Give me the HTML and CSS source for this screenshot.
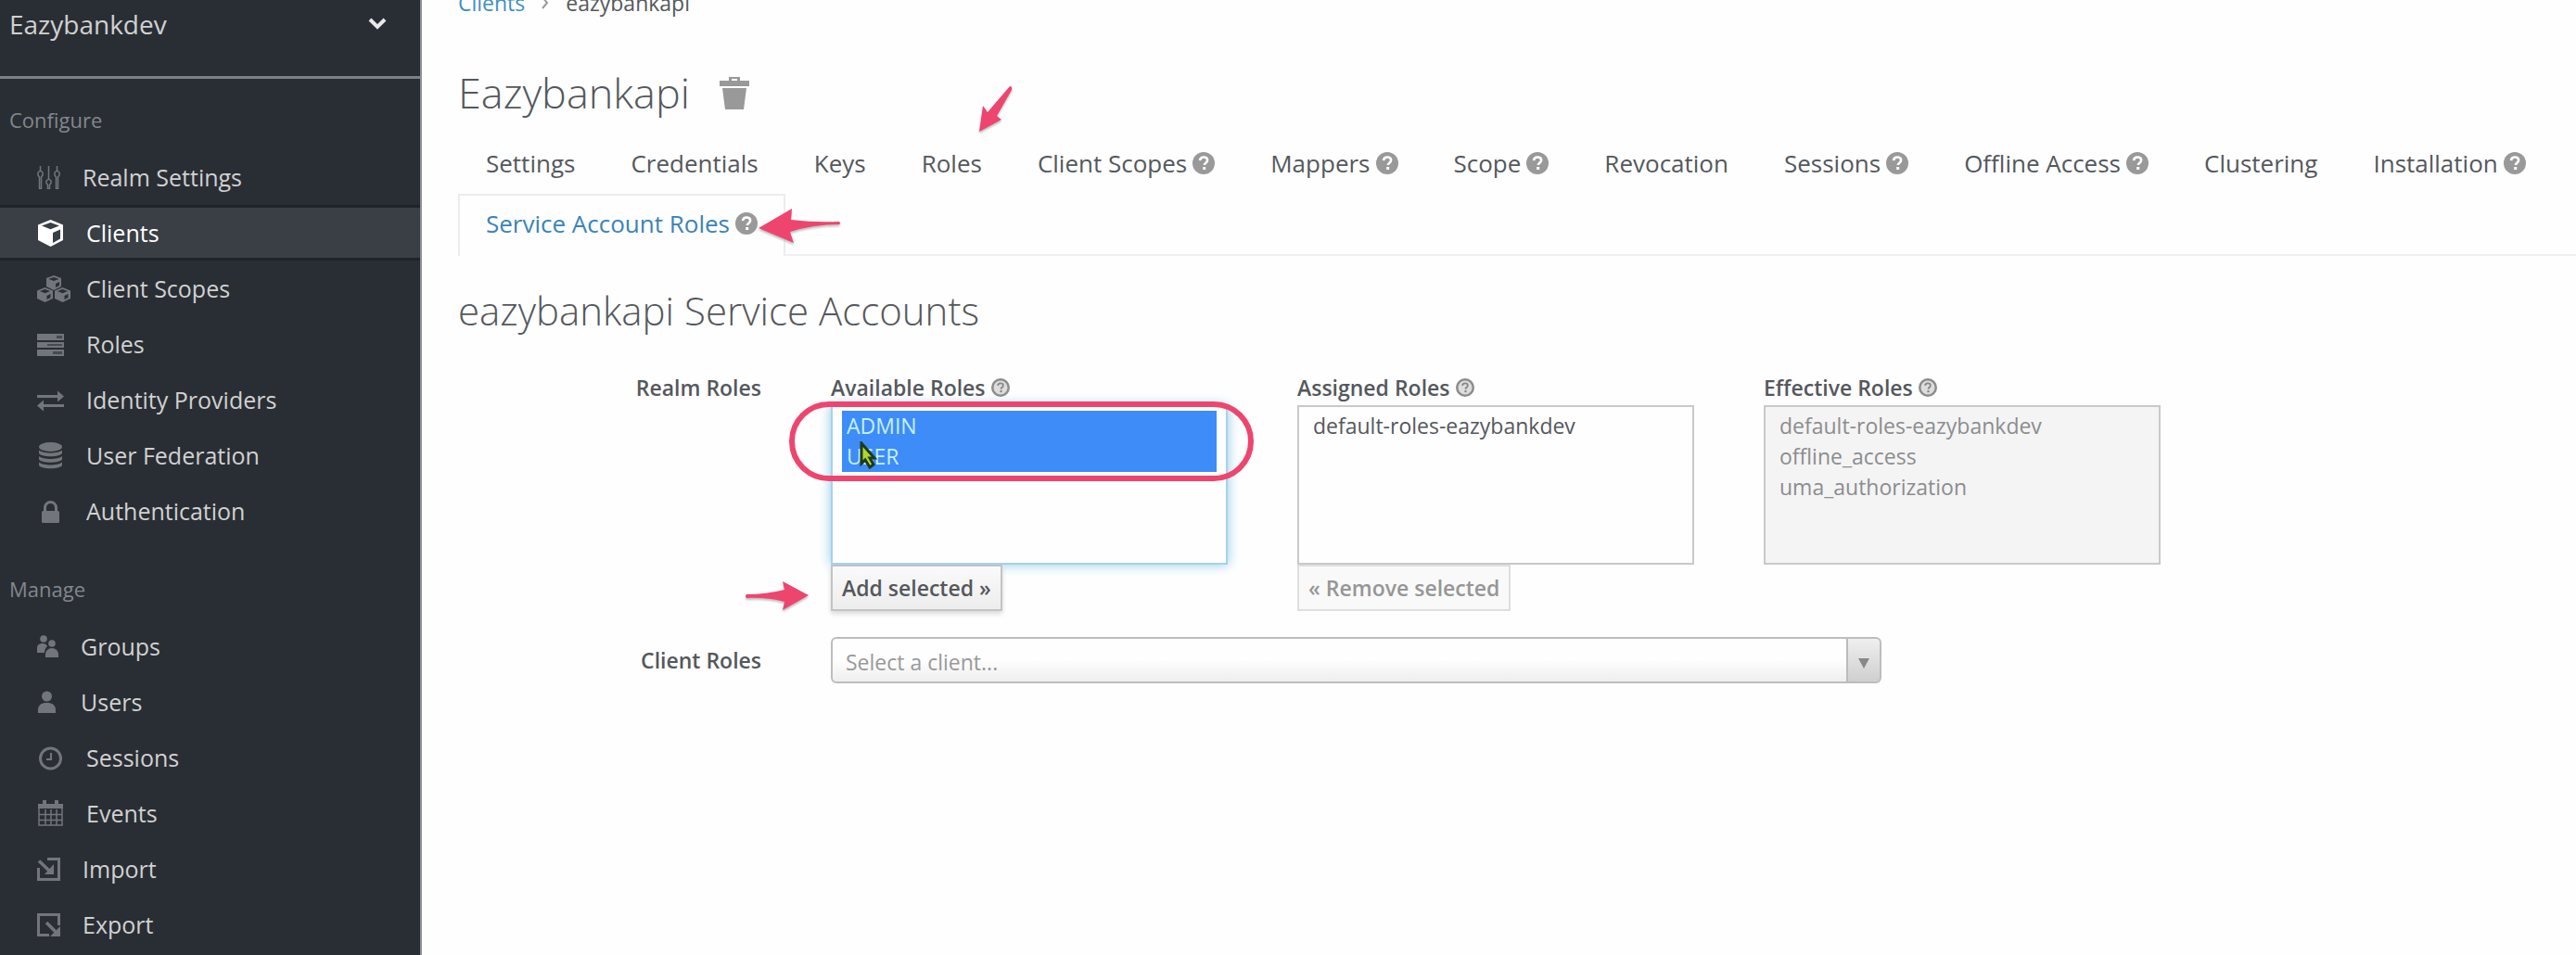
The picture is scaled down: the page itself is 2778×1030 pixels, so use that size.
FILE: index.html
```html
<!DOCTYPE html>
<html lang="en">
<head>
<meta charset="utf-8">
<meta name="viewport" content="width=device-width, initial-scale=1">
<title>Keycloak Admin Console</title>
<link rel="stylesheet" href="styles.css">
</head>
<body>
<svg class="sprite" aria-hidden="true">
  <symbol id="help" viewBox="0 0 24 24"><circle cx="12" cy="12" r="12" fill="#999"/><path d="M8 9.200C8.200 6.800 9.800 5.500 12.100 5.500c2.400 0 4 1.300 4 3.300 0 2.800-3.300 2.900-3.300 5.200" fill="none" stroke="#fff" stroke-width="2.600"/><rect x="11.200" y="16" width="3" height="3" fill="#fff"/></symbol>
  <symbol id="help-ring" viewBox="0 0 24 24"><circle cx="12" cy="12" r="10.500" fill="#ddd" stroke="#8c8c8c" stroke-width="3"/><path d="M8.500 9.600c.2-2 1.600-3.100 3.500-3.100 2 0 3.400 1.100 3.400 2.800 0 2.400-2.800 2.500-2.800 4.700" fill="none" stroke="#888" stroke-width="2.200"/><rect x="11.300" y="15.600" width="2.600" height="2.600" fill="#888"/></symbol>
</svg>
<div class="app">
  <nav class="sidebar" aria-label="Main">
    <button class="realm" type="button">Eazybankdev
      <svg class="chevron" viewBox="0 0 20 13"><path d="M2 2l8 8 8-8" fill="none" stroke="#e8e8e8" stroke-width="4"/></svg>
    </button>
    <section class="nav-group">
      <h2>Configure</h2>
      <ul>
        <li><a href="#"><svg class="icon" viewBox="0 0 25 25"><g fill="none" stroke="currentColor" stroke-width="1.500"><path d="M3.500 0v5M3.500 5L1 7v3l1.500 2v12.500h2V12L6 10V7zM12.500 0v14M12.500 14L10 16v2.500l1.500 2v4h2v-4l1.500-2V16zM21.500 0v5M21.500 5L19 7v3l1.500 2v12.500h2V12l1.500-2V7z"/></g></svg>Realm Settings</a></li>
        <li class="active"><a href="#" aria-current="page"><svg class="icon icon-lg" viewBox="0 0 29 29"><path d="M14.500 0L28 5.500V22L14.500 29 1 22V5.500z" fill="currentColor"/><path d="M5 6.500L14.500 3 24 6.500l-9.500 3.700zM17 14l8-3.500v10L17 25z" fill="#393f45"/></svg>Clients</a></li>
        <li><a href="#"><svg class="icon icon-lg icon-wide" viewBox="0 0 36 29"><g fill="currentColor"><path d="M18 0l8 3v9l-8 4-8-4V3z"/><path d="M8.500 13l8.500 3.500V25l-8.500 4L0 25v-8.500z"/><path d="M27.500 13l8.500 3.500V25l-8.500 4-8.500-4v-8.500z"/></g><g fill="#292e34"><path d="M12.500 4L18 2l5.500 2L18 6zM20 9l4-2v4l-4 2zM3 17l5.500-2 5.500 2-5.500 2.200zM10.500 22l4-2v4l-4 2zM22 17l5.500-2 5.500 2-5.500 2.200zM29.500 22l4-2v4l-4 2z"/></g></svg>Client Scopes</a></li>
        <li><a href="#"><svg class="icon icon-lg" viewBox="0 0 29 29"><path d="M0 3h29v7H0zM0 12h29v6H0zM0 20h29v7H0z" fill="currentColor"/><path d="M21 5h6v3h-6zM11 14h16v2H11zM17 22h10v3H17z" fill="#444a51"/></svg>Roles</a></li>
        <li><a href="#"><svg class="icon icon-lg" viewBox="0 0 29 29"><path d="M0 9h22V4.500l7 6-7 6V12H0zM29 19H7v-4.500l-7 6 7 6V22h22z" fill="currentColor"/></svg>Identity Providers</a></li>
        <li><a href="#"><svg class="icon icon-lg" viewBox="0 0 29 29"><g fill="currentColor"><ellipse cx="14.500" cy="5" rx="12.500" ry="5"/><path d="M2 8.500c4 4 21 4 25 0v3c-1 5-24 5-25 0zM2 15c4 4 21 4 25 0v3c-1 5-24 5-25 0zM2 21.500c4 4 21 4 25 0v3c-1 5-24 5-25 0z"/></g></svg>User Federation</a></li>
        <li><a href="#"><svg class="icon icon-lg" viewBox="0 0 29 29"><rect x="5" y="14" width="19" height="13" rx="1.500" fill="currentColor"/><path d="M8.500 15v-4.500a6 6 0 0 1 12 0V15" fill="none" stroke="currentColor" stroke-width="3"/></svg>Authentication</a></li>
      </ul>
    </section>
    <section class="nav-group">
      <h2>Manage</h2>
      <ul>
        <li><a href="#"><svg class="icon icon-sm" viewBox="0 0 23 25"><g fill="currentColor"><circle cx="7" cy="4" r="3.800"/><path d="M0 19v-5c0-4 3-5 6-5 3 0 4 1 5 3-2 2-3 4-3 7z"/><circle cx="16" cy="9" r="3.800"/><path d="M9 24v-3c0-4 3-7 7-7s7 3 7 7v3z"/></g></svg>Groups</a></li>
        <li><a href="#"><svg class="icon icon-sm" viewBox="0 0 23 25"><g fill="currentColor"><circle cx="10.500" cy="6" r="5.500"/><path d="M1 24v-3c0-6 4-8 9.500-8s9.500 2 9.500 8v3z"/></g></svg>Users</a></li>
        <li><a href="#"><svg class="icon icon-lg" viewBox="0 0 29 29"><circle cx="14.500" cy="15" r="11" fill="none" stroke="currentColor" stroke-width="3"/><path d="M15 9v7h-5" fill="none" stroke="currentColor" stroke-width="2"/></svg>Sessions</a></li>
        <li><a href="#"><svg class="icon icon-lg" viewBox="0 0 29 29"><path d="M2 5h25v22H2zM2 7h25M9 10v17M15 10v17M21 10v17M2 15.500h25M2 21.500h25" fill="none" stroke="currentColor" stroke-width="1.500"/><path d="M1 4h27v5H1zM6 0h4v7H6zM19 0h4v7h-4z" fill="currentColor"/></svg>Events</a></li>
        <li><a href="#"><svg class="icon" viewBox="0 0 25 25"><path d="M11 1.500h12.500v22h-22V11" fill="none" stroke="currentColor" stroke-width="3"/><path d="M2 3.500L13 14" stroke="currentColor" stroke-width="3.500"/><path d="M18 7v11H8z" fill="currentColor"/></svg>Import</a></li>
        <li><a href="#"><svg class="icon" viewBox="0 0 25 25"><path d="M23.500 13V1.500h-22v22H13" fill="none" stroke="currentColor" stroke-width="3"/><path d="M10 10l11 11" stroke="currentColor" stroke-width="3.500"/><path d="M25 14v11H14z" fill="currentColor"/></svg>Export</a></li>
      </ul>
    </section>
  </nav>

  <main class="content">
    <ol class="breadcrumb">
      <li><a href="#">Clients</a></li>
      <li class="sep" aria-hidden="true"><svg viewBox="0 0 8 14"><path d="M1 1l5 6-5 6" fill="none" stroke="#9c9c9c" stroke-width="2"/></svg></li>
      <li>eazybankapi</li>
    </ol>
    <div class="title">
      <h1>Eazybankapi</h1>
      <button type="button" class="trash" aria-label="Delete client"><svg viewBox="0 0 32 36"><path d="M0 5h10V1h12v4h10v6H0zM3 13h26l-3 23H6z" fill="#999"/><path d="M13 3h6v2h-6z" fill="#fff"/></svg></button>
    </div>
    <ul class="tabs">
      <li><a href="#">Settings</a></li>
      <li><a href="#">Credentials</a></li>
      <li><a href="#">Keys</a></li>
      <li><a href="#">Roles</a><svg class="mark mark-roles" viewBox="0 0 40 56"><path d="M3 51L7 23l5 7L36 2q3 0 2 4L22 34l5 4z"/></svg></li>
      <li><a href="#">Client Scopes<svg class="help"><use href="#help"/></svg></a></li>
      <li><a href="#">Mappers<svg class="help"><use href="#help"/></svg></a></li>
      <li><a href="#">Scope<svg class="help"><use href="#help"/></svg></a></li>
      <li><a href="#">Revocation</a></li>
      <li><a href="#">Sessions<svg class="help"><use href="#help"/></svg></a></li>
      <li><a href="#">Offline Access<svg class="help"><use href="#help"/></svg></a></li>
      <li><a href="#">Clustering</a></li>
      <li><a href="#">Installation<svg class="help"><use href="#help"/></svg></a></li>
      <li class="active"><a href="#">Service Account Roles<svg class="help"><use href="#help"/></svg></a><svg class="mark mark-service" viewBox="0 0 92 44"><path d="M1 23L37 2l-1 12q24 3 52 2 2 2 0 3Q60 19 35 27l4 12z"/></svg></li>
    </ul>

    <h2 class="section-title">eazybankapi Service Accounts</h2>
    <form class="roles">
      <div class="row-label">Realm Roles</div>
      <div class="role-col">
        <div class="col-label"><label for="available">Available Roles</label><svg class="help"><use href="#help-ring"/></svg></div>
        <select id="available" class="focused" multiple size="5">
          <option selected>ADMIN</option>
          <option selected>USER</option>
        </select>
        <button type="button" class="btn">Add selected »</button>
        <div class="highlight"></div>
        <svg class="cursor" viewBox="0 0 20 30"><path d="M2 2v22l4-4 5 8 4-3-4-7h5z" fill="#b5d52e" stroke="#1d3b1c" stroke-width="3"/></svg>
        <svg class="mark mark-add" viewBox="0 0 74 38"><path d="M70 18L42 3l2 9Q24 17 3 17q-2 2 0 4 22-1 41 4l-2 9z"/></svg>
      </div>
      <div class="role-col">
        <div class="col-label"><label for="assigned">Assigned Roles</label><svg class="help"><use href="#help-ring"/></svg></div>
        <select id="assigned" multiple size="5">
          <option>default-roles-eazybankdev</option>
        </select>
        <button type="button" class="btn" disabled>« Remove selected</button>
      </div>
      <div class="role-col">
        <div class="col-label"><label for="effective">Effective Roles</label><svg class="help"><use href="#help-ring"/></svg></div>
        <select id="effective" multiple size="5" disabled>
          <option>default-roles-eazybankdev</option>
          <option>offline_access</option>
          <option>uma_authorization</option>
        </select>
      </div>
      <label class="row-label client-label" for="client">Client Roles</label>
      <div class="client-select">
        <select id="client"><option>Select a client...</option></select>
      </div>
    </form>
  </main>
</div>
</body>
</html>
```
FILE: styles.css
```css
* { box-sizing: border-box; }

body {
  margin: 0;
  font-family: "Open Sans", "Noto Sans", sans-serif;
  font-size: 23px;
  line-height: 30px;
  color: #54585d;
  background: #fefefe;
}

h1, h2, ul, ol { margin: 0; padding: 0; }
ul, ol { list-style: none; }
a { text-decoration: none; color: inherit; }
button, select { font: inherit; }
.sprite { position: absolute; width: 0; height: 0; }

.app {
  display: grid;
  grid-template-columns: 455px minmax(0, 1fr);
  min-height: 100vh;
}

/* Sidebar */
.sidebar {
  background: #292e34;
  border-right: 2px solid #8f9397;
  color: #d1d1d1;
}

.realm {
  display: flex;
  align-items: flex-start;
  justify-content: space-between;
  width: 100%;
  height: 85px;
  padding: 6px 36px 0 10px;
  border: 0;
  border-bottom: 3px solid #7b8087;
  background: none;
  color: #d1d1d1;
  font-size: 28px;
  line-height: 40px;
}
.chevron { width: 20px; height: 13px; margin-top: 13px; }

.nav-group { padding-top: 29px; }
.nav-group + .nav-group { padding-top: 39px; }
.nav-group h2 {
  padding-left: 10px;
  margin-bottom: 17px;
  font-size: 22px;
  font-weight: 400;
  color: #83878c;
}
.nav-group a {
  display: flex;
  align-items: center;
  gap: 24px;
  height: 60px;
  padding-left: 40px;
  font-size: 25px;
}
.nav-group .active a {
  background: #393f45;
  border-top: 3px solid #202428;
  border-bottom: 3px solid #202428;
  color: #fff;
}
.icon { width: 25px; height: 25px; flex: none; color: #72767b; }
.icon-sm { width: 23px; }
.icon-lg { width: 29px; height: 29px; }
.icon-wide { width: 36px; margin-right: -7px; }
.active .icon { color: #fff; }

/* Main column */
.content { padding-left: 39px; }

.breadcrumb {
  display: flex;
  align-items: center;
  gap: 18px;
  margin-top: -12px;
}
.breadcrumb a { color: #3f8fc4; }
.sep svg { display: block; width: 8px; height: 14px; }

.title {
  display: flex;
  align-items: center;
  gap: 32px;
  margin: 52px 0 14px;
}
h1 { font-size: 45px; font-weight: 300; line-height: 60px; }
.trash { padding: 0; border: 0; background: none; }
.trash svg { display: block; width: 32px; height: 36px; }

.tabs {
  display: flex;
  flex-wrap: wrap;
  border-bottom: 2px solid #efefef;
}
.tabs li { position: relative; }
.tabs a {
  display: flex;
  align-items: center;
  gap: 6px;
  height: 65px;
  padding: 0 28px 4px;
  border: 2px solid transparent;
  border-bottom: 0;
  font-size: 26px;
}
.tabs .active { margin-bottom: -2px; }
.tabs .active a {
  height: 67px;
  padding-bottom: 6px;
  background: #fefefe;
  border-color: #ececec;
  color: #3a83b8;
}
.help { width: 24px; height: 24px; flex: none; }

.section-title {
  margin: 34px 0 43px;
  font-size: 42px;
  font-weight: 300;
  line-height: 50px;
}

/* Role form */
.roles {
  display: grid;
  grid-template-columns: 327px repeat(3, minmax(0, 428px));
  gap: 28px 75px;
}
.row-label, .col-label { font-weight: 600; }
.row-label { text-align: right; }
.role-col { position: relative; }
.col-label { display: flex; align-items: center; gap: 6px; margin-bottom: 4px; }
.col-label .help { width: 20px; height: 20px; }

.role-col select {
  display: block;
  width: 100%;
  height: 172px;
  padding: 4px 10px;
  overflow: hidden;
  border: 2px solid #c9c9c9;
  border-radius: 0;
  outline: 0;
  background: #fefefe;
  color: #54585d;
}
.role-col option { min-height: 33px; padding: 0 5px; line-height: 33px; }
.role-col option:checked {
  background: #3e8cf7 linear-gradient(#3e8cf7, #3e8cf7);
  color: #c4f0ff;
  -webkit-text-fill-color: #c4f0ff;
}
.role-col .focused {
  border-color: #a5d2e8;
  box-shadow: 0 0 12px #8ecbe8;
}
.role-col select:disabled { background: #f4f4f4; opacity: 1; }
.role-col select:disabled option { color: #8b8d8f; }

.btn {
  position: relative;
  height: 50px;
  padding: 0 10px;
  border: 2px solid #c3c3c3;
  background: linear-gradient(#fafafa, #ededed);
  box-shadow: 0 3px 5px #d9d9d9;
  color: #54585d;
  font-weight: 600;
}
.btn:disabled {
  background: #f9f9f9;
  border-color: #dedede;
  box-shadow: none;
  color: #969696;
}

.client-label { align-self: center; }
.client-select {
  position: relative;
  grid-column: 2 / -1;
  max-width: 1133px;
}
.client-select select {
  display: block;
  width: 100%;
  height: 50px;
  padding: 4px 14px 0;
  appearance: none;
  border: 2px solid #bdbdbd;
  border-radius: 6px;
  background:
    linear-gradient(#bbb, #bbb) right 34px top / 2px 100% no-repeat,
    linear-gradient(#efefef, #cfcfcf) right / 34px 100% no-repeat,
    linear-gradient(#fefefe 50%, #eee);
  color: #999;
}
.client-select::after {
  content: "";
  position: absolute;
  right: 13px;
  top: 23px;
  width: 12px;
  height: 11px;
  background: #888;
  clip-path: polygon(0 0, 100% 0, 50% 100%);
  pointer-events: none;
}

/* Callouts drawn over the page */
.mark {
  position: absolute;
  z-index: 2;
  fill: #ee456e;
  filter: drop-shadow(0 2px 1px #bbb);
  pointer-events: none;
}
.mark-roles { width: 40px; height: 56px; left: 89px; top: -53px; }
.mark-service { width: 92px; height: 44px; left: 323px; top: 14px; }
.mark-add { width: 74px; height: 38px; left: -94px; bottom: -3px; }
.highlight {
  position: absolute;
  left: -45px;
  right: -28px;
  top: 30px;
  height: 86px;
  border: 6px solid #ee456e;
  border-radius: 43px;
  pointer-events: none;
}
.cursor {
  position: absolute;
  left: 31px;
  top: 73px;
  width: 20px;
  height: 30px;
  pointer-events: none;
}
```
